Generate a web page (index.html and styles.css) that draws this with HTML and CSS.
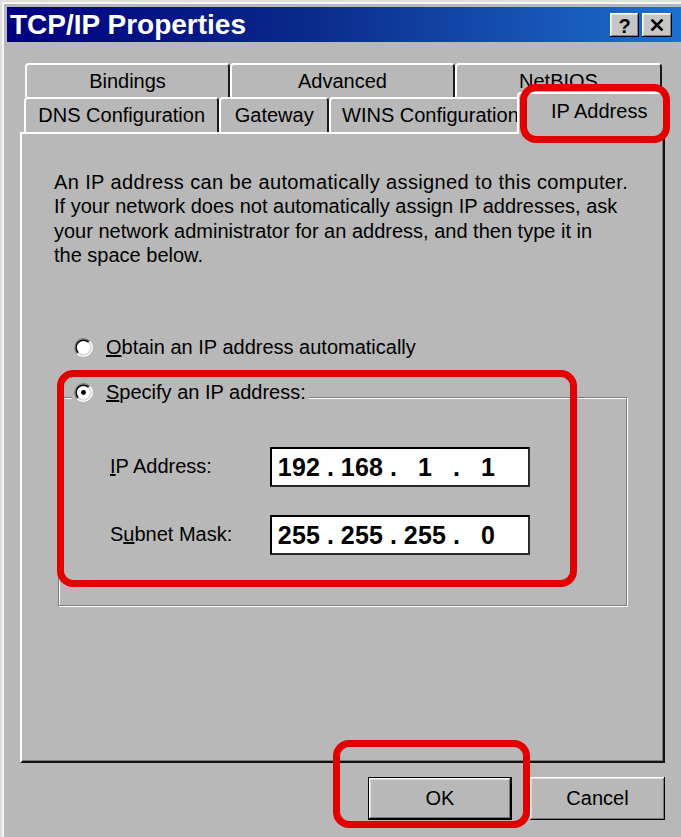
FILE: index.html
```html
<!DOCTYPE html>
<html lang="en">
<head>
<meta charset="utf-8">
<title>TCP/IP Properties</title>
<link rel="stylesheet" href="styles.css">
</head>
<body>
<div class="window">
  <div class="titlebar">
    <span class="title">TCP/IP Properties</span>
    <div class="tb-buttons">
      <span class="tb-btn help">?</span>
      <span class="tb-btn close">
        <svg width="14" height="12" viewBox="0 0 14 12"><path d="M1.5 0.5 L12.5 11.5 M12.5 0.5 L1.5 11.5" stroke="#000" stroke-width="2.6" fill="none"/></svg>
      </span>
    </div>
  </div>

  <div class="content">
    <div class="tabs">
      <div class="tab-row back">
        <div class="tab t-bind">Bindings</div>
        <div class="tab t-adv">Advanced</div>
        <div class="tab t-net">NetBIOS</div>
      </div>
      <div class="tab-row front">
        <div class="tab t-dns">DNS Configuration</div>
        <div class="tab t-gw">Gateway</div>
        <div class="tab t-wins"><span>WINS Configuration</span></div>
        <div class="tab t-ip selected">IP Address</div>
      </div>
    </div>

    <div class="panel">
      <p class="intro"><span class="wide">An IP address can be automatically assigned to this computer.</span><br>If your network does not automatically assign IP addresses, ask<br>your network administrator for an address, and then type it in<br>the space below.</p>

      <div class="radio-row first">
        <svg class="radio" width="19" height="19" viewBox="0 0 20 20">
          <circle cx="10" cy="10" r="7.2" fill="#fff"/>
          <path d="M3.46 16.54 A9.25 9.25 0 0 1 16.54 3.46" stroke="#808080" stroke-width="1.5" fill="none"/>
          <path d="M16.54 3.46 A9.25 9.25 0 0 1 3.46 16.54" stroke="#fff" stroke-width="1.5" fill="none"/>
          <path d="M4.52 15.48 A7.75 7.75 0 0 1 15.48 4.52" stroke="#000" stroke-width="1.5" fill="none"/>
          <path d="M15.48 4.52 A7.75 7.75 0 0 1 4.52 15.48" stroke="#dcdcdc" stroke-width="1.5" fill="none"/>
        </svg>
        <span><u>O</u>btain an IP address automatically</span>
      </div>

      <div class="group">
        <div class="legend radio-row">
          <svg class="radio" width="19" height="19" viewBox="0 0 20 20">
            <circle cx="10" cy="10" r="7.2" fill="#fff"/>
            <path d="M3.46 16.54 A9.25 9.25 0 0 1 16.54 3.46" stroke="#808080" stroke-width="1.5" fill="none"/>
            <path d="M16.54 3.46 A9.25 9.25 0 0 1 3.46 16.54" stroke="#fff" stroke-width="1.5" fill="none"/>
            <path d="M4.52 15.48 A7.75 7.75 0 0 1 15.48 4.52" stroke="#000" stroke-width="1.5" fill="none"/>
            <path d="M15.48 4.52 A7.75 7.75 0 0 1 4.52 15.48" stroke="#dcdcdc" stroke-width="1.5" fill="none"/>
            <circle cx="10" cy="10" r="2.6" fill="#000"/>
          </svg>
          <span><u>S</u>pecify an IP address:</span>
        </div>

        <div class="field-row r1">
          <span class="label"><u>I</u>P Address:</span>
          <div class="ipbox">
            <span class="oct">192</span><span class="dot">.</span><span class="oct">168</span><span class="dot">.</span><span class="oct">1</span><span class="dot">.</span><span class="oct">1</span>
          </div>
        </div>
        <div class="field-row r2">
          <span class="label">S<u>u</u>bnet Mask:</span>
          <div class="ipbox">
            <span class="oct">255</span><span class="dot">.</span><span class="oct">255</span><span class="dot">.</span><span class="oct">255</span><span class="dot">.</span><span class="oct">0</span>
          </div>
        </div>
      </div>
    </div>

    <div class="buttons">
      <div class="btn default">OK</div>
      <div class="btn cancel">Cancel</div>
    </div>
  </div>

  <div class="hl hl-tab"></div>
  <div class="hl hl-group"></div>
  <div class="hl hl-ok"></div>
</div>
</body>
</html>
```

FILE: styles.css
```css
html, body {
  margin: 0;
  padding: 0;
}

body {
  width: 681px;
  height: 837px;
  overflow: hidden;
  background: #b8b8b8;
  font-family: "Liberation Sans", Arial, sans-serif;
  color: #000;
}

.window {
  position: relative;
  box-sizing: border-box;
  width: 681px;
  height: 837px;
  padding: 7px 0 0 7px;
  background: #b8b8b8;
  box-shadow: inset 2px 2px 0 #dedede, inset 4px 4px 0 #f6f6f6;
  overflow: hidden;
}

/* ---------- title bar ---------- */
.titlebar {
  height: 35px;
  display: flex;
  align-items: center;
  justify-content: space-between;
  padding: 0 9px 0 3px;
  background: linear-gradient(to right, #000080 0%, #0a2a8c 45%, #1d6fd0 100%);
}

.title {
  color: #fff;
  font-weight: bold;
  font-size: 28px;
  line-height: 35px;
  white-space: nowrap;
}

.tb-buttons {
  display: flex;
  gap: 3px;
  margin-top: 1px;
}

.tb-btn {
  box-sizing: border-box;
  height: 24px;
  width: 29px;
  display: flex;
  align-items: center;
  justify-content: center;
  background: #c6c6c6;
  box-shadow: inset -1px -1px 0 #000, inset 1px 1px 0 #fff, inset -2px -2px 0 #808080, inset 2px 2px 0 #e4e4e4;
  font-weight: bold;
  font-size: 20px;
  line-height: 1;
}

.tb-btn.close {
  width: 30px;
}

.help {
  padding-top: 1px;
}

/* ---------- content ---------- */
.content {
  padding: 21px 0 0 13px;
}

.tabs {
  width: 645px;
}

.tab-row {
  display: flex;
  align-items: flex-end;
}

.tab-row.back {
  height: 34px;
  padding-left: 5px;
}

.tab-row.front {
  height: 35px;
  padding-left: 4px;
}

.tab {
  box-sizing: border-box;
  height: 100%;
  display: flex;
  align-items: center;
  justify-content: center;
  font-size: 20px;
  white-space: nowrap;
  background: #b8b8b8;
  border-top: 2px solid #fff;
  border-left: 2px solid #fff;
  border-right: 2px solid #1a1a1a;
  border-radius: 4px 4px 0 0;
  overflow: hidden;
}

.t-bind { width: 205px; }
.t-adv { width: 225px; }
.t-net { width: 207px; }

.t-dns { width: 196px; }
.t-gw { width: 110px; }
.t-wins {
  width: 200px;
  justify-content: flex-start;
  padding-left: 11px;
}

.tab.selected {
  position: relative;
  z-index: 2;
  width: 148px;
  height: 42px;
  margin-left: -11px;
  margin-bottom: -2px;
  padding: 0 0 6px 16px;
}

/* ---------- panel ---------- */
.panel {
  box-sizing: border-box;
  width: 645px;
  height: 631px;
  padding: 36px 0 0 32px;
  border-top: 2px solid #fff;
  border-left: 2px solid #fff;
  border-right: 2px solid #111;
  border-bottom: 2px solid #111;
  box-shadow: inset -1px -1px 0 #7a7a7a;
}

.intro {
  margin: 0;
  font-size: 20px;
  line-height: 24.4px;
  white-space: nowrap;
}

.intro .wide {
  letter-spacing: 0.38px;
}

.radio-row {
  display: flex;
  align-items: center;
  gap: 13px;
  height: 24px;
  font-size: 20px;
  white-space: nowrap;
}

.radio-row.first {
  margin: 68px 0 0 20px;
}

.radio {
  flex: none;
  display: block;
}

/* ---------- group box ---------- */
.group {
  box-sizing: border-box;
  width: 569px;
  height: 209px;
  margin: 37px 0 0 4px;
  border: 1px solid #7c7c7c;
  box-shadow: 1px 1px 0 #fff, inset 1px 1px 0 #fff;
}

.legend {
  width: fit-content;
  margin: -17px 0 0 13px;
  padding: 0 3px 0 2px;
  background: #b8b8b8;
}

.field-row {
  display: flex;
  align-items: center;
  height: 40px;
  padding-left: 51px;
}

.field-row.r1 {
  margin-top: 42px;
}

.field-row.r2 {
  margin-top: 28px;
}

.label {
  width: 160px;
  font-size: 20px;
  white-space: nowrap;
}

.ipbox {
  box-sizing: border-box;
  width: 260px;
  height: 40px;
  display: flex;
  padding-left: 2px;
  background: #fff;
  border: 2px solid;
  border-color: #000 #2a2a2a #2a2a2a #000;
  font-weight: bold;
  font-size: 25px;
  line-height: 36px;
}

.oct {
  width: 50px;
  text-align: center;
  letter-spacing: 0.3px;
}

.dot {
  width: 13px;
  text-align: center;
}

/* ---------- buttons ---------- */
.buttons {
  display: flex;
  justify-content: flex-end;
  gap: 18px;
  margin-top: 14px;
  padding-right: 16px;
}

.btn {
  box-sizing: border-box;
  height: 43px;
  display: flex;
  align-items: center;
  justify-content: center;
  font-size: 20px;
  background: #b8b8b8;
  box-shadow: inset -1px -1px 0 #000, inset 1px 1px 0 #fff, inset -2px -2px 0 #7a7a7a, inset 2px 2px 0 #dcdcdc;
}

.btn.default {
  width: 144px;
  box-shadow: inset 0 0 0 1px #000, inset -2px -2px 0 #000, inset 2px 2px 0 #fff, inset -3px -3px 0 #7a7a7a, inset 3px 3px 0 #dcdcdc;
}

.btn.cancel {
  width: 135px;
}

/* ---------- red highlight marks ---------- */
.hl {
  position: absolute;
  box-sizing: border-box;
  border: 7px solid #e20000;
  border-radius: 16px;
  z-index: 5;
}

.hl-tab {
  left: 520px;
  top: 84px;
  width: 150px;
  height: 59px;
}

.hl-group {
  left: 57px;
  top: 370px;
  width: 520px;
  height: 217px;
}

.hl-ok {
  left: 333px;
  top: 740px;
  width: 197px;
  height: 88px;
}
```
